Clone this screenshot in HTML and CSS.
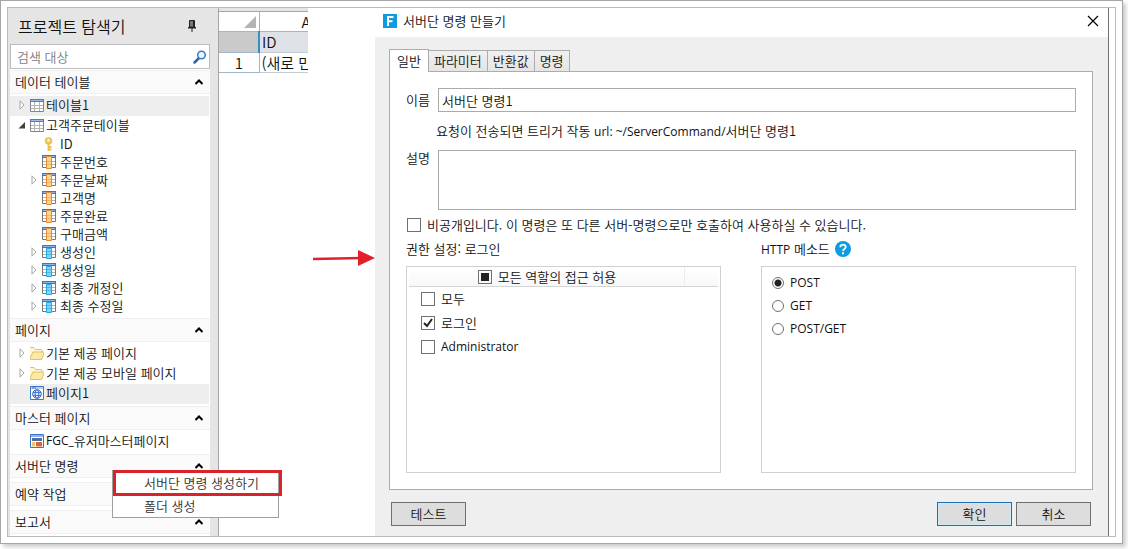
FILE: index.html
```html
<!DOCTYPE html>
<html lang="ko">
<head>
    <meta charset="UTF-8">
    <meta name="viewport" content="width=device-width, initial-scale=1.0">
    <title>서버단 명령 만들기</title>
    <link rel="stylesheet" href="styles.css">
</head>
<body>

    <!-- Shared icons -->
    <svg class="sprite" aria-hidden="true">
        <symbol id="closed" viewBox="0 0 10 10"><path d="M3 .8v8.4L7 5z" fill="#fff" stroke="#a6a6a6"/></symbol>
        <symbol id="open" viewBox="0 0 10 10"><path d="M8 2v6.500H1.500z" fill="#404040"/></symbol>
        <symbol id="chevron" viewBox="0 0 10 8"><path d="M1.500 6 5 2.500 8.500 6" fill="none" stroke="#000" stroke-width="2"/></symbol>
        <symbol id="table" viewBox="0 0 14 14">
            <path d="M.5 1.500h13v12H.5z" fill="#fff" stroke="#858585"/>
            <path d="M1 7.500h12M1 10.500h12M4.500 4v9M9.500 4v9" stroke="#b3b3b3" fill="none"/>
            <path d="M0 1h14v3H0z" fill="#4a7cc9"/><path d="M1 2h12v1H1z" fill="#9dbdec"/>
        </symbol>
        <symbol id="column" viewBox="0 0 14 14">
            <path d="M.5 1.500h13v11H.5z" fill="#fff" stroke="#777"/>
            <path d="M1 6.500h12M1 9.500h12" stroke="#b3b3b3"/>
            <path d="M0 0h14v3H0z" fill="#4472c4"/><path d="M1 1h12v1H1z" fill="#8fb2ea"/>
            <path d="M4.500 1.500h5v12h-5z" fill="#ffd48a" stroke="#e58b36"/>
            <path d="M5 6.500h4M5 9.500h4" stroke="#f5b566"/>
        </symbol>
        <symbol id="syscolumn" viewBox="0 0 14 14">
            <path d="M.5 1.500h13v11H.5z" fill="#fff" stroke="#777"/>
            <path d="M1 6.500h12M1 9.500h12" stroke="#b3b3b3"/>
            <path d="M0 0h14v3H0z" fill="#4472c4"/><path d="M1 1h12v1H1z" fill="#8fb2ea"/>
            <path d="M4.500 3.500h5v10h-5z" fill="#7fd4fb" stroke="#2aa5df"/>
            <path d="M5 6.500h4M5 9.500h4" stroke="#49b9ec"/>
        </symbol>
        <symbol id="key" viewBox="0 0 14 14">
            <circle cx="6.500" cy="4" r="3" fill="#f6d568" stroke="#e8c04a" stroke-width="1.500"/>
            <path d="M6.500 6.500V14M7 10h2.500M7 12.500h2.500" stroke="#e8c04a" stroke-width="1.800"/>
            <circle cx="6.500" cy="3" r="1" fill="#fff"/>
        </symbol>
        <symbol id="folder" viewBox="0 0 14 14">
            <path d="M-.5 13.500V2.500q0-1 1-1h3.500l1.500 2h5.500q1 0 1 1v1.500" fill="#fff6d6" stroke="#e2c05c"/>
            <path d="M-.5 13.500 3 6h11.500L11.500 13.500z" fill="#fbeaa6" stroke="#e2c05c" stroke-linejoin="round"/>
        </symbol>
        <symbol id="page" viewBox="0 0 14 14">
            <path d="M.5.5h13v13H.5z" fill="#fff" stroke="#3f74c6"/>
            <path d="M1 1h12v2H1z" fill="#b9d0f3"/><path d="M2 2h4" stroke="#3f74c6"/>
            <circle cx="7" cy="8" r="4.300" fill="#e6f0ff" stroke="#2f69c4"/>
            <ellipse cx="7" cy="8" rx="1.900" ry="4.300" fill="none" stroke="#2f69c4"/>
            <path d="M3 6.500h8M3 9.500h8" stroke="#2f69c4" stroke-width=".8"/>
        </symbol>
        <symbol id="master" viewBox="0 0 14 14">
            <path d="M.5.5h13v13H.5z" fill="#fff" stroke="#3f74c6"/>
            <path d="M1 1h12v2H1z" fill="#8fb2ea"/><path d="M2 4h10v3H2z" fill="#4a6fa9"/>
            <path d="M2 8h3v4.500H2z" fill="#e9c572"/><path d="M6 8h6v4.500H6z" fill="#d9653b"/>
        </symbol>
    </svg>

    <div class="frame">
        <div class="screen">

            <!-- Project explorer -->
            <aside class="explorer">
                <div class="explorer-title">
                    <h1>프로젝트 탐색기</h1>
                    <svg class="pin" width="10" height="14" viewBox="0 0 10 14"><path d="M2.500 1.500h5V8h-5z" fill="#777" stroke="#222"/><path d="M6 2h1.500v6H6zM1 8h8v1.500H1zM4.500 9.500h1V13h-1z" fill="#222"/></svg>
                </div>
                <div class="search">
                    <input type="text" placeholder="검색 대상" aria-label="검색 대상">
                    <svg width="14" height="14" viewBox="0 0 14 14"><path d="M1.500 12.500 6 8" stroke="#2c63ad" stroke-width="2.500" stroke-linecap="round"/><circle cx="8.500" cy="5" r="3.800" fill="#eef7ff" stroke="#3b78c3" stroke-width="1.500"/></svg>
                </div>

                <section class="group">
                    <button class="group-head">데이터 테이블<svg width="10" height="8"><use href="#chevron"/></svg></button>
                    <ul class="tree">
                        <li class="selected"><svg class="toggle"><use href="#closed"/></svg><svg class="icon"><use href="#table"/></svg>테이블1</li>
                        <li><svg class="toggle"><use href="#open"/></svg><svg class="icon"><use href="#table"/></svg>고객주문테이블</li>
                        <li class="child"><svg class="toggle"></svg><svg class="icon"><use href="#key"/></svg>ID</li>
                        <li class="child"><svg class="toggle"></svg><svg class="icon"><use href="#column"/></svg>주문번호</li>
                        <li class="child"><svg class="toggle"><use href="#closed"/></svg><svg class="icon"><use href="#column"/></svg>주문날짜</li>
                        <li class="child"><svg class="toggle"></svg><svg class="icon"><use href="#column"/></svg>고객명</li>
                        <li class="child"><svg class="toggle"></svg><svg class="icon"><use href="#column"/></svg>주문완료</li>
                        <li class="child"><svg class="toggle"></svg><svg class="icon"><use href="#column"/></svg>구매금액</li>
                        <li class="child"><svg class="toggle"><use href="#closed"/></svg><svg class="icon"><use href="#syscolumn"/></svg>생성인</li>
                        <li class="child"><svg class="toggle"><use href="#closed"/></svg><svg class="icon"><use href="#syscolumn"/></svg>생성일</li>
                        <li class="child"><svg class="toggle"><use href="#closed"/></svg><svg class="icon"><use href="#syscolumn"/></svg>최종 개정인</li>
                        <li class="child"><svg class="toggle"><use href="#closed"/></svg><svg class="icon"><use href="#syscolumn"/></svg>최종 수정일</li>
                    </ul>
                </section>

                <section class="group">
                    <button class="group-head">페이지<svg width="10" height="8"><use href="#chevron"/></svg></button>
                    <ul class="tree">
                        <li><svg class="toggle"><use href="#closed"/></svg><svg class="icon"><use href="#folder"/></svg>기본 제공 페이지</li>
                        <li><svg class="toggle"><use href="#closed"/></svg><svg class="icon"><use href="#folder"/></svg>기본 제공 모바일 페이지</li>
                        <li class="selected"><svg class="toggle"></svg><svg class="icon"><use href="#page"/></svg>페이지1</li>
                    </ul>
                </section>

                <section class="group">
                    <button class="group-head">마스터 페이지<svg width="10" height="8"><use href="#chevron"/></svg></button>
                    <ul class="tree">
                        <li><svg class="toggle"></svg><svg class="icon"><use href="#master"/></svg><span class="latin">FGC_</span>유저마스터페이지</li>
                    </ul>
                </section>

                <section class="group">
                    <button class="group-head">서버단 명령<svg width="10" height="8"><use href="#chevron"/></svg></button>
                    <ul class="tree"></ul>
                    <!-- Context menu -->
                    <div class="menu">
                        <button class="marked">서버단 명령 생성하기</button>
                        <button>폴더 생성</button>
                    </div>
                </section>

                <section class="group">
                    <button class="group-head">예약 작업<svg width="10" height="8"><use href="#chevron"/></svg></button>
                    <ul class="tree"></ul>
                </section>

                <section class="group">
                    <button class="group-head">보고서<svg width="10" height="8"><use href="#chevron"/></svg></button>
                </section>
            </aside>

            <!-- Spreadsheet -->
            <div class="sheet">
                <table>
                    <tr class="letters">
                        <th><svg width="12" height="12" viewBox="0 0 12 12"><path d="M12 0v12H0z" fill="#b4b4b4"/></svg></th>
                        <td>A</td>
                    </tr>
                    <tr class="names">
                        <th></th>
                        <td>ID</td>
                    </tr>
                    <tr>
                        <th>1</th>
                        <td>(새로 만들기)</td>
                    </tr>
                </table>
            </div>

            <div class="arrow">
                <svg width="64" height="16" viewBox="0 0 64 16"><path d="M1 9 50 8" stroke="#e3202a" stroke-width="2.500"/><path d="M46 0 63 8 46 16z" fill="#e3202a"/></svg>
            </div>

            <!-- Dialog -->
            <main class="dialog">
                <header class="titlebar">
                    <svg width="14" height="14" viewBox="0 0 14 14"><path d="M0 0h14v14H0z" fill="#0d9ce0"/><path d="M5 12V3h5.500M5 7.200h4.500" stroke="#fff" stroke-width="2" fill="none"/></svg>
                    <h2>서버단 명령 만들기</h2>
                    <button class="close" aria-label="닫기"><svg width="10" height="10" viewBox="0 0 10 10"><path d="M0 0l10 10M10 0 0 10" stroke="#000" stroke-width="1.200"/></svg></button>
                </header>

                <div class="dialog-body">
                    <nav class="tabs">
                        <button class="active">일반</button>
                        <button>파라미터</button>
                        <button>반환값</button>
                        <button>명령</button>
                    </nav>

                    <div class="panel">
                        <div class="field">
                            <label for="name">이름</label>
                            <input type="text" id="name" value="서버단 명령1">
                        </div>
                        <p class="hint">요청이 전송되면 트리거 작동 <span class="latin">url: ~/ServerCommand/</span>서버단 명령1</p>
                        <div class="field">
                            <label for="desc">설명</label>
                            <textarea id="desc"></textarea>
                        </div>
                        <label class="check private"><input type="checkbox">비공개입니다. 이 명령은 또 다른 서버-명령으로만 호출하여 사용하실 수 있습니다.</label>

                        <div class="columns">
                            <section class="column">
                                <h3>권한 설정: 로그인</h3>
                                <div class="box roles">
                                    <div class="roles-head">
                                        <label class="check"><input type="checkbox" class="partial">모든 역할의 접근 허용</label>
                                    </div>
                                    <label class="check"><input type="checkbox">모두</label>
                                    <label class="check"><input type="checkbox" checked>로그인</label>
                                    <label class="check latin"><input type="checkbox">Administrator</label>
                                </div>
                            </section>
                            <section class="column">
                                <h3>
                                    <span><span class="latin">HTTP</span> 메소드</span>
                                    <svg width="16" height="16" viewBox="0 0 16 16"><circle cx="8" cy="8" r="8" fill="#0d9ce0"/><path d="M5.300 6.200c0-3.400 5.400-3.400 5.400-.2 0 1.900-2.600 1.900-2.600 4" fill="none" stroke="#fff" stroke-width="1.800"/><path d="M7 11.300h2v2H7z" fill="#fff"/></svg>
                                </h3>
                                <div class="box methods">
                                    <label class="check latin"><input type="radio" name="method" checked>POST</label>
                                    <label class="check latin"><input type="radio" name="method">GET</label>
                                    <label class="check latin"><input type="radio" name="method">POST/GET</label>
                                </div>
                            </section>
                        </div>
                    </div>

                    <footer class="actions">
                        <button>테스트</button>
                        <button class="primary">확인</button>
                        <button>취소</button>
                    </footer>
                </div>
            </main>

        </div>
    </div>

</body>
</html>
```
FILE: styles.css
```css
* {
    margin: 0;
    padding: 0;
    box-sizing: border-box;
}

body {
    font-family: 'Noto Sans CJK KR', sans-serif;
    font-weight: 350;
    font-size: 13px;
    line-height: 18px;
    color: #111;
    background: #fff;
    display: flex;
    min-height: 100vh;
    padding: 0 5px 5px 0;
}

button,
input,
textarea {
    font: inherit;
    color: inherit;
}

svg {
    flex: none;
    overflow: visible;
}

.latin {
    font-family: 'Open Sans', sans-serif;
    font-size: 12px;
    font-weight: 400;
    line-height: 16px;
}

.sprite {
    position: absolute;
    width: 0;
    height: 0;
}

.frame {
    flex: 1;
    display: flex;
    border: 1px solid #a5a5a5;
    padding: 6px;
    background: #fff;
    box-shadow: 3px 3px 4px rgba(0, 0, 0, 0.2);
}

.screen {
    flex: 1;
    display: flex;
    border: 1px solid #bababa;
}

/* Project explorer */
.explorer {
    width: 210px;
    padding-right: 8px;
    background: linear-gradient(#e5e5e5, #e5e5e5) right / 8px 100% no-repeat, #fff;
    border-left: 2px solid #e5e5e5;
}

.explorer-title {
    display: flex;
    align-items: center;
    justify-content: space-between;
    height: 36px;
    padding: 0 13px 0 8px;
    background: #e5e5e5;
}

.explorer-title h1 {
    font-size: 16px;
    font-weight: inherit;
}

.search {
    display: flex;
    align-items: center;
    height: 25px;
    margin-bottom: 1px;
    padding: 0 2px 0 6px;
    border: 1px solid #bcbcbc;
    background: #fff;
}

.search input {
    flex: 1;
    min-width: 0;
    border: none;
    outline: none;
}

.search input::placeholder {
    color: #808080;
}

.group {
    position: relative;
}

.group-head {
    display: flex;
    align-items: center;
    justify-content: space-between;
    width: 100%;
    height: 24px;
    padding: 0 6px 0 5px;
    border: 1px solid #f0f0f0;
    border-width: 1px 0;
    background: #fafafa;
}

.tree {
    list-style: none;
    padding: 2px 0;
}

.tree li {
    display: flex;
    align-items: center;
    height: 20px;
    margin-right: 1px;
    padding: 0 0 2px 7px;
}

.tree .selected {
    background: #eee;
}

.tree .toggle {
    width: 10px;
    height: 10px;
    margin-right: 3px;
}

.tree .icon {
    width: 14px;
    height: 14px;
    margin-right: 2px;
}

.tree .child {
    height: 18px;
    padding-left: 19px;
}

.tree .child .icon {
    margin-right: 4px;
}

.menu {
    position: absolute;
    top: 16px;
    left: 102px;
    z-index: 2;
    width: 167px;
    height: 48px;
    border: 1px solid #a0a0a0;
    background: #fff;
    color: #333;
}

.menu button {
    display: block;
    width: 100%;
    height: 20px;
    padding-left: 31px;
    border: none;
    background: none;
    text-align: left;
}

.menu .marked {
    width: 169px;
    height: 26px;
    margin-top: -1px;
    padding-left: 28px;
    border: 3px solid #d8232a;
}

/* Spreadsheet */
.sheet {
    width: 90px;
    padding-top: 3px;
    overflow: hidden;
    border-left: 1px solid #a5a5a5;
    background: linear-gradient(#e5e5e5, #e5e5e5) top / 100% 3px no-repeat;
}

.sheet table {
    width: 140px;
    table-layout: fixed;
    border-collapse: collapse;
    font-size: 15px;
}

.sheet th,
.sheet td {
    height: 20px;
    border: 1px solid #c4ccd6;
    border-left: none;
    font-weight: inherit;
    white-space: nowrap;
}

.sheet th {
    width: 40px;
    border-color: #9eb6ce;
}

.sheet td {
    padding-left: 2px;
}

.sheet .letters th {
    padding-right: 3px;
    text-align: right;
    line-height: 12px;
}

.sheet .letters td {
    padding-left: 42px;
    border-bottom-color: #9eb6ce;
}

.sheet .letters th,
.sheet .letters td {
    border-top-color: #a5a5a5;
}

.sheet .names th {
    background: #cacaca;
    border-right: 2px solid #3493bd;
}

.sheet .names td {
    height: 21px;
    background: #dee1e6;
}

.arrow {
    width: 67px;
    padding: 242px 0 0 4px;
}

/* Dialog */
.dialog {
    flex: 1;
    display: flex;
    flex-direction: column;
    margin-right: 6px;
    border-right: 1px solid #707070;
}

.titlebar {
    display: flex;
    align-items: center;
    height: 29px;
    padding: 0 10px 3px 8px;
}

.titlebar h2 {
    flex: 1;
    margin-left: 6px;
    font-size: 13px;
    font-weight: inherit;
}

.close {
    width: 10px;
    height: 10px;
    border: none;
    background: none;
    line-height: 0;
}

.dialog-body {
    flex: 1;
    display: flex;
    flex-direction: column;
    padding: 12px 15px 10px 14px;
    background: #efefef;
}

.tabs {
    display: flex;
    align-items: flex-end;
}

.tabs button {
    height: 21px;
    margin-right: -1px;
    padding: 0 5px;
    border: 1px solid #acacac;
    border-bottom: none;
    background: linear-gradient(#f0f0f0, #e5e5e5);
}

.tabs .active {
    position: relative;
    height: 23px;
    margin-bottom: -1px;
    padding: 0 7px;
    background: #fff;
}

.panel {
    flex: 1;
    display: flex;
    flex-direction: column;
    padding: 16px;
    border: 1px solid #acacac;
    background: #fff;
}

.field {
    display: flex;
}

.field label {
    width: 32px;
    line-height: 16px;
}

.field input {
    flex: 1;
    height: 24px;
    padding: 0 3px;
    border: 1px solid #ababab;
}

.field input,
.field textarea {
    outline: none;
}

.field:first-child label {
    line-height: 24px;
}

.field textarea {
    flex: 1;
    height: 60px;
    border: 1px solid #ababab;
    resize: none;
}

.hint {
    padding: 10px 0 10px 30px;
}

.check {
    display: flex;
    align-items: center;
    gap: 6px;
}

.check input {
    appearance: none;
    width: 14px;
    height: 14px;
    border: 1px solid #707070;
    background: #fff;
}

.check input[type="checkbox"]:checked {
    background: url("data:image/svg+xml,%3Csvg xmlns='http://www.w3.org/2000/svg' viewBox='0 0 12 12'%3E%3Cpath d='M2 6l3 3 5-7' fill='none' stroke='%23222' stroke-width='2'/%3E%3C/svg%3E");
}

.check .partial {
    background: linear-gradient(#222, #222) center / 8px 8px no-repeat;
}

.check input[type="radio"] {
    width: 12px;
    height: 12px;
    border-radius: 50%;
}

.check input[type="radio"]:checked {
    background: radial-gradient(circle, #222 3px, transparent 4px);
}

.private {
    margin: 6px 0 6px 1px;
}

.columns {
    flex: 1;
    display: grid;
    grid-template-columns: 1fr 1fr;
    gap: 40px;
}

.column {
    display: flex;
    flex-direction: column;
}

.column h3 {
    display: flex;
    align-items: center;
    gap: 5px;
    height: 18px;
    margin-bottom: 8px;
    font-size: 13px;
    font-weight: inherit;
}

.box {
    flex: 1;
    border: 1px solid #d0d0d0;
}

.roles {
    padding: 0 2px;
}

.roles-head {
    display: flex;
    justify-content: center;
    height: 20px;
    padding-right: 33px;
    border-bottom: 1px solid #d5d5d5;
    background: linear-gradient(#ececec, #ececec) right 33px top / 1px 100% no-repeat, linear-gradient(#fff, #f7f8fa);
}

.roles > .check {
    height: 24px;
    padding-left: 12px;
}

.methods {
    padding: 4px 10px;
}

.methods .check {
    height: 23px;
}

.actions {
    display: flex;
    gap: 4px;
    padding: 12px 2px 0;
}

.actions button {
    width: 75px;
    height: 24px;
    border: 1px solid #707070;
    background: #ddd;
}

.actions button:first-child {
    margin-right: auto;
}

.actions .primary {
    border-color: #1870b8;
    box-shadow: inset 0 0 0 1px #cfeaf8;
}
```
